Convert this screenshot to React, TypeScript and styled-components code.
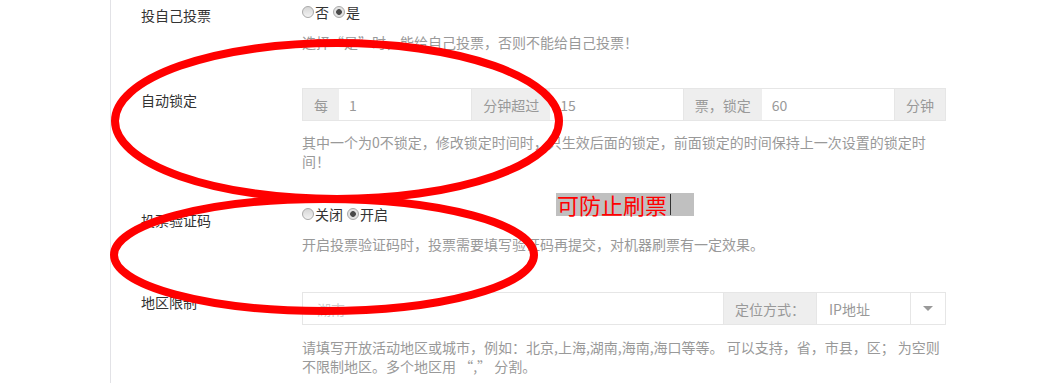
import styled, { createGlobalStyle } from "styled-components";

const GlobalStyle = createGlobalStyle`
    html, body {
        margin: 0;
        background: #fff;
    }
    body {
        font-family: "Noto Sans CJK SC", "Microsoft YaHei", sans-serif;
        font-size: 14px;
        color: #333;
    }
`;

export default function App() {
    return (
        <Page>
            <GlobalStyle />
            <Panel>
                <Row $space={2}>
                    <Label $offset={3}>投自己投票</Label>
                    <Control>
                        <RadioLine>
                            <RadioOption>
                                <Radio name="self" />否
                            </RadioOption>
                            <RadioOption>
                                <Radio name="self" defaultChecked />是
                            </RadioOption>
                        </RadioLine>
                        <Help $gap={11}>选择“是”时，能给自己投票，否则不能给自己投票！</Help>
                    </Control>
                </Row>

                <Row $space={36}>
                    <Label $offset={2}>自动锁定</Label>
                    <Control>
                        <InputGroup>
                            <Addon>每</Addon>
                            <Field defaultValue="1" />
                            <Addon>分钟超过</Addon>
                            <Field defaultValue="15" />
                            <Addon>票，锁定</Addon>
                            <Field defaultValue="60" />
                            <Addon>分钟</Addon>
                        </InputGroup>
                        <Help $gap={12}>
                            其中一个为0不锁定，修改锁定时间时，只生效后面的锁定，前面锁定的时间保持上一次设置的锁定时间！
                        </Help>
                    </Control>
                </Row>

                <Row $space={33}>
                    <Label $offset={6}>投票验证码</Label>
                    <Control>
                        <RadioLine>
                            <RadioOption>
                                <Radio name="captcha" />关闭
                            </RadioOption>
                            <RadioOption>
                                <Radio name="captcha" defaultChecked />开启
                            </RadioOption>
                        </RadioLine>
                        <Help $gap={11}>开启投票验证码时，投票需要填写验证码再提交，对机器刷票有一定效果。</Help>
                    </Control>
                </Row>

                <Row $space={38}>
                    <Label $offset={0}>地区限制</Label>
                    <Control>
                        <InputGroup>
                            <Field placeholder="湖南" $wide />
                            <Addon>定位方式：</Addon>
                            <SelectBox>IP地址</SelectBox>
                            <CaretButton>
                                <Caret />
                            </CaretButton>
                        </InputGroup>
                        <Help $gap={13}>
                            请填写开放活动地区或城市，例如：北京,上海,湖南,海南,海口等等。 可以支持，省，市县，区； 为空则不限制地区。多个地区用 “,” 分割。
                        </Help>
                    </Control>
                </Row>
            </Panel>

            <Note>
                可防止刷票
                <Cursor />
            </Note>

            <Marks viewBox="0 0 1051 383">
                <ellipse cx="337" cy="121" rx="222" ry="78" />
                <ellipse cx="324" cy="255" rx="210" ry="56" />
            </Marks>
        </Page>
    );
}

const Page = styled.div`
    position: relative;
    width: 1051px;
    height: 383px;
    overflow: hidden;
`;

const Panel = styled.div`
    margin-left: 110px;
    height: 100%;
    border-left: 1px solid #e2e2e6;
    padding-left: 30px;
    box-sizing: border-box;
    overflow: hidden;
`;

const Row = styled.div<{ $space: number }>`
    display: grid;
    grid-template-columns: 161px 644px;
    margin-top: ${(p) => p.$space}px;
`;

const Label = styled.div<{ $offset: number }>`
    line-height: 20px;
    padding-top: ${(p) => p.$offset}px;
    color: #333;
`;

const Control = styled.div`
    display: flex;
    flex-direction: column;
`;

const RadioLine = styled.div`
    display: flex;
    align-items: center;
    height: 20px;
    gap: 4px;
`;

const RadioOption = styled.label`
    display: inline-flex;
    align-items: center;
    color: #333;
    line-height: 20px;
`;

const Radio = styled.input.attrs({ type: "radio" })`
    appearance: none;
    width: 12px;
    height: 12px;
    margin: 0 1px 0 0;
    border-radius: 50%;
    border: 1px solid #a9a9a9;
    box-sizing: border-box;
    background: linear-gradient(#d6d6d6, #f3f3f3);
    &:checked {
        background: radial-gradient(circle, #4a4a4a 0 2.5px, #e2e2e2 3.2px);
    }
`;

const Help = styled.div<{ $gap: number }>`
    margin-top: ${(p) => p.$gap}px;
    max-width: 638px;
    line-height: 19px;
    color: #999;
`;

const InputGroup = styled.div`
    display: flex;
    height: 33px;
    border: 1px solid #e6e6e6;
    box-sizing: border-box;
    & > * + * {
        border-left: 1px solid #e6e6e6;
    }
`;

const Addon = styled.div`
    display: flex;
    align-items: center;
    padding: 0 11px;
    background: #eee;
    color: #999;
    white-space: nowrap;
`;

const Field = styled.input<{ $wide?: boolean }>`
    flex: 1;
    min-width: 0;
    border: none;
    outline: none;
    padding: 0 ${(p) => (p.$wide ? 14 : 10)}px;
    font: inherit;
    color: #999;
    background: #fff;
    &::placeholder {
        color: #ccc;
    }
`;

const SelectBox = styled.div`
    display: flex;
    align-items: center;
    width: 94px;
    padding: 0 12px;
    box-sizing: border-box;
    color: #999;
`;

const CaretButton = styled.div`
    display: flex;
    align-items: center;
    justify-content: center;
    width: 34px;
`;

const Caret = styled.span`
    width: 0;
    height: 0;
    border-left: 5px solid transparent;
    border-right: 5px solid transparent;
    border-top: 5px solid #999;
`;

const Note = styled.div`
    position: absolute;
    left: 556px;
    top: 193px;
    width: 138px;
    height: 23px;
    display: flex;
    align-items: center;
    padding-left: 1px;
    box-sizing: border-box;
    background: #c0c0c0;
    color: #f00;
    font-size: 22px;
    line-height: 23px;
    letter-spacing: 0;
`;

const Cursor = styled.span`
    display: inline-block;
    width: 1px;
    height: 21px;
    margin-left: 3px;
    background: #333;
`;

const Marks = styled.svg`
    position: absolute;
    left: 0;
    top: 0;
    width: 1051px;
    height: 383px;
    pointer-events: none;
    ellipse {
        fill: none;
        stroke: #f00;
        stroke-width: 8;
    }
`;
